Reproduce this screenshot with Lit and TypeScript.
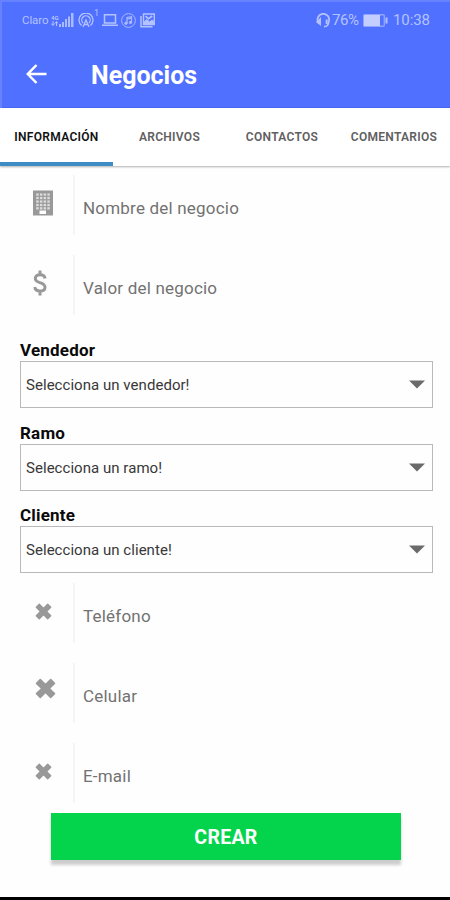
import { LitElement, html, svg, css } from "lit";
import { customElement, property } from "lit/decorators.js";

const crossPath = "M1.300 4.300 4.300 1.300 8.500 5.500 12.700 1.300 15.700 4.300 11.500 8.500 15.700 12.700 12.700 15.700 8.500 11.500 4.300 15.700 1.300 12.700 5.500 8.500Z";

const icons: Record<string, unknown> = {
  building: svg`<svg width="20" height="26" viewBox="0 0 20 26">
    <path fill="#999" fill-rule="evenodd" d="M0 .5H20V25.500H0ZM6.500 20.500V24H13V20.500Z"/>
    <g fill="#dcdcdc">${[3.2, 6.900, 10.600, 14.300].map((x) =>
      [3.400, 6.900, 10.400, 13.900, 17.200].map((y) =>
        svg`<rect x=${x} y=${y} width="2.500" height="2.300"/>`))}</g></svg>`,
  dollar: svg`<svg width="14" height="26" viewBox="0 0 14 26">
    <path d="M12 8.500C11.700 5.800 9.800 4.800 7 4.800 4.200 4.800 2.300 6 2.300 8.400 2.300 10.900 4.400 11.700 7 12.600 10 13.500 12 14.600 12 17.300 12 19.800 10.200 21.100 7 21.100 3.900 21.100 2.100 19.600 1.800 17M7 .5V4.500M7 21.300V25.500" fill="none" stroke="#999" stroke-width="3"/></svg>`,
  cross: svg`<svg width="17" height="17" viewBox="0 0 17 17">
    <path d=${crossPath} fill="#999" stroke="#999" stroke-width="1.400" stroke-linejoin="round"/></svg>`,
  crossLarge: svg`<svg width="21" height="21" viewBox="0 0 17 17">
    <path d=${crossPath} fill="#999" stroke="#999" stroke-width="1.400" stroke-linejoin="round"/></svg>`,
};

@customElement("status-bar")
class StatusBar extends LitElement {
  static styles = css`
    :host { display: flex; justify-content: space-between; height: 40px; box-sizing: border-box; padding: 10px 20px 0 22px; color: #b4c3ff; }
    .group { display: flex; height: 20px; align-items: center; }
    .carrier { font-size: 11.500px; width: 29px; letter-spacing: -.1px; }
    .net { display: flex; flex-direction: column; font-size: 6px; line-height: 6px; font-weight: 700; width: 8px; }
    .signal { margin-right: 4px; }
    .count { font-size: 9px; align-self: flex-start; line-height: 6px; width: 7px; margin-left: 0; margin-right: 1px; }
    .laptop { margin-right: 3px; }
    .music { margin-right: 4px; }
    .num { font-size: 15px; letter-spacing: -.2px; line-height: 20px; }
    .percent { width: 28px; margin-left: 1px; margin-right: 3px; letter-spacing: -.4px; }
    .clock { width: 37px; margin-left: 5px; letter-spacing: -.1px; }
    svg { display: block; flex: none; }
  `;
  render() {
    return html`
      <div class="group">
        <span class="carrier">Claro</span>
        <span class="net"><span>4G</span><svg width="7" height="5" viewBox="0 0 7 5"><path d="M2 0V4M0 2.500 2 4.500 3.500 2.500M5.500 5V1M4 2.500 5.500 .5 7 2.500" stroke="#b4c3ff" fill="none"/></svg></span>
        <svg class="signal" width="15" height="14" viewBox="0 0 15 14" fill="#a9baff">
          <path d="M0 11H2V14H0ZM3 9H5V14H3ZM6 6H8V14H6ZM9 3.500H11V14H9ZM12 0H14.500V14H12Z"/></svg>
        <svg width="16" height="14" viewBox="0 0 16 14" fill="none" stroke="#b4c3ff" stroke-width="1.300">
          <path d="M3.600 12.500A7 7 0 1 1 12.400 12.500M5 10A4.200 4.200 0 1 1 11 10"/><path d="M5 14 8 7 11 14M6 11.500H10"/></svg>
        <span class="count">1</span>
        <svg class="laptop" width="16" height="14" viewBox="0 0 16 14" fill="none" stroke="#b4c3ff" stroke-width="1.500">
          <path d="M2.500 10V1.800H13.500V10ZM0 12.200H16"/></svg>
        <svg class="music" width="15" height="15" viewBox="0 0 15 15" fill="none" stroke="#a9baff">
          <circle cx="7.500" cy="7.500" r="6.900"/><path d="M6 10V4.500L10.500 3.700V9.300M6 6 10.500 5.200" stroke-width="1.200"/>
          <circle cx="5" cy="10.200" r="1.200" fill="#b4c3ff"/><circle cx="9.500" cy="9.500" r="1.200" fill="#b4c3ff"/></svg>
        <svg width="15" height="15" viewBox="0 0 15 15" fill="none" stroke="#b4c3ff">
          <path d="M3.500 1H14.300V11.500H3.500Z" stroke-width="1.400"/><path d="M1 3V13.800H12.500" stroke-width="1.500"/>
          <path d="M4 11V9L7 6.500 9.500 9 12 7 14 8.500V11Z" fill="#b4c3ff"/><path d="M5.500 3.200 8.500 5.700 12.300 3" stroke-width="1.600"/></svg>
      </div>
      <div class="group">
        <svg width="15" height="15" viewBox="0 0 15 15" fill="none" stroke="#b4c3ff" stroke-width="1.700">
          <path d="M2.600 10A5.800 5.800 0 1 1 12.800 8.500C12.600 11.500 11.500 13.700 8 13.700"/>
          <path d="M4 6.500V11L1.500 9ZM10.700 6.500V11" stroke-width="2"/></svg>
        <span class="num percent">76%</span>
        <svg width="25" height="13" viewBox="0 0 25 13">
          <rect x=".7" y=".7" width="20.600" height="11.600" rx="1" fill="none" stroke="#90a4ff" stroke-width="1.400"/>
          <rect x="1" y="1" width="16" height="11" fill="#c3ceff"/><rect x="22.500" y="3.500" width="2" height="6" fill="#b4c3ff"/></svg>
        <span class="num clock">10:38</span>
      </div>`;
  }
}

@customElement("icon-field")
class IconField extends LitElement {
  @property() icon = "cross";
  @property() label = "";
  static styles = css`
    :host { display: grid; grid-template-columns: 53px 1fr; height: 60px; margin-bottom: 20px; }
    .icon { padding-left: 13px; height: 56px; display: flex; align-items: center; }
    .icon.crossLarge { padding-left: 15px; height: 51px; }
    .icon.cross { padding-left: 15px; height: 57px; }
    .text { border-left: 2px solid #f5f5f5; padding: 2px 0 0 8px; height: 58px; font-size: 17px; letter-spacing: .2px; color: #727272; line-height: 62px; }
    svg { display: block; }
  `;
  render() {
    return html`<div class="icon ${this.icon}">${icons[this.icon]}</div><div class="text">${this.label}</div>`;
  }
}

@customElement("select-field")
class SelectField extends LitElement {
  @property() label = "";
  @property() value = "";
  static styles = css`
    :host { display: block; height: 82.500px; }
    .label { height: 22px; font-size: 17px; line-height: 22px; font-weight: 700; color: #0a0a0a; letter-spacing: .2px; }
    .box { height: 47px; width: 413px; box-sizing: border-box; border: 1.500px solid #b9b9b9; padding: 1px 7px 0 5px; display: flex; align-items: center; justify-content: space-between; font-size: 15px; letter-spacing: .04px; color: #383838; }
    svg { display: block; margin-top: -1px; }
  `;
  render() {
    return html`<div class="label">${this.label}</div>
      <div class="box"><span>${this.value}</span>
        <svg width="16" height="9" viewBox="0 0 16 9"><path d="M0 .5H16L8 8.500Z" fill="#6a6a6a"/></svg></div>`;
  }
}

@customElement("app-root")
class AppRoot extends LitElement {
  static styles = css`
    :host { display: flex; flex-direction: column; width: 450px; height: 900px; overflow: hidden; background: #fefefe; font-family: Roboto, "Liberation Sans", sans-serif; }
    .header { height: 108px; background: #5070ff; box-shadow: inset 2px 2px #6682ff, inset 0 -1px #3e60ef; flex: none; }
    .bar { display: flex; align-items: center; height: 68px; padding-left: 26px; color: #fff; }
    .bar svg { margin-top: -1px; }
    .title { margin: 2px 0 0 44px; font-size: 25px; font-weight: 700; }
    .tabs { display: grid; grid-template-columns: 113px 113px 112px 112px; height: 58px; background: #fff; box-shadow: 0 1px 2px 0 #b0b0b0; flex: none; }
    .tab { box-sizing: border-box; height: 58px; text-align: center; font-size: 12px; letter-spacing: .3px; font-weight: 600; line-height: 59px; color: #606060; white-space: nowrap; }
    .active { color: #111; border-bottom: 4px solid #3d8dc4; }
    .form { padding: 9px 17px 0 20px; height: 637px; box-sizing: border-box; flex: none; }
    .selects { padding-top: 4px; height: 248px; box-sizing: border-box; }
    .create { margin: 10px 0 0 51px; width: 350px; height: 47px; flex: none; background: #04d44b; color: #fff; font-size: 19.500px; letter-spacing: .3px; font-weight: 700; line-height: 49px; text-align: center; box-shadow: 0 5px 3px #ccc; }
    .nav { margin-top: auto; height: 3px; flex: none; background: #000; }
  `;
  render() {
    return html`
      <div class="header">
        <status-bar></status-bar>
        <div class="bar">
          <svg width="21" height="20" viewBox="0 0 21 20" fill="none" stroke="#fff" stroke-width="2.500"><path d="M20.500 10H2M10.500 1 1.800 10 10.500 19"/></svg>
          <div class="title">Negocios</div>
        </div>
      </div>
      <div class="tabs">
        <div class="tab active">INFORMACIÓN</div><div class="tab">ARCHIVOS</div>
        <div class="tab">CONTACTOS</div><div class="tab">COMENTARIOS</div>
      </div>
      <div class="form">
        <icon-field icon="building" label="Nombre del negocio"></icon-field>
        <icon-field icon="dollar" label="Valor del negocio"></icon-field>
        <div class="selects">
          <select-field label="Vendedor" value="Selecciona un vendedor!"></select-field>
          <select-field label="Ramo" value="Selecciona un ramo!"></select-field>
          <select-field label="Cliente" value="Selecciona un cliente!"></select-field>
        </div>
        <icon-field icon="cross" label="Teléfono"></icon-field>
        <icon-field icon="crossLarge" label="Celular"></icon-field>
        <icon-field icon="cross" label="E-mail"></icon-field>
      </div>
      <div class="create">CREAR</div>
      <div class="nav"></div>`;
  }
}
